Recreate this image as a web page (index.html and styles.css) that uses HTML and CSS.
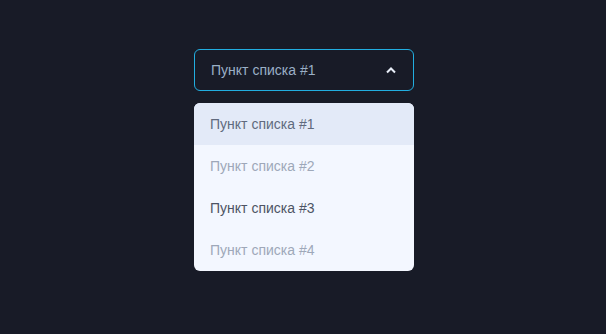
FILE: index.html
```html
<!DOCTYPE html>
<html>
  <head>
    <meta charset="utf-8">
    <title>Select</title>
    <link rel="stylesheet" href="styles.css">
  </head>
  <body>
    <section class="select">
      <div class="select-head">
        <span class="select-value">Пункт списка #1</span>
        <svg class="select-arrow" width="12" height="8" viewBox="0 0 12 8">
          <path d="M2 6.5 L6 2.5 L10 6.5" fill="none" stroke="#e8eef8" stroke-width="2"/>
        </svg>
      </div>
      <ul class="select-list">
        <li class="active">Пункт списка #1</li>
        <li class="muted">Пункт списка #2</li>
        <li>Пункт списка #3</li>
        <li class="muted">Пункт списка #4</li>
      </ul>
    </section>
  </body>
</html>
```

FILE: styles.css
```css
html {
  background: #181b27;
}
body {
  margin: 0;
  font-family: "Liberation Sans", Arial, sans-serif;
  font-size: 14px;
}
.select {
  width: 220px;
  margin: 49px auto 0;
  position: relative;
  left: 1px;
}
.select-head {
  height: 40px;
  display: flex;
  align-items: center;
  justify-content: space-between;
  padding: 0 16px 0 16px;
  border: 1px solid #22aee0;
  border-radius: 6px;
}
.select-value {
  color: #9aafc6;
}
.select-arrow {
  display: block;
  margin-right: 0;
}
.select-list {
  list-style: none;
  margin: 12px 0 0;
  padding: 0;
  background: #f3f7ff;
  border-radius: 6px;
  overflow: hidden;
}
.select-list li {
  height: 42px;
  line-height: 42px;
  padding: 0 16px;
  color: #4d5464;
}
.select-list li.active {
  background: #e3eaf8;
  color: #606a7e;
}
.select-list li.muted {
  color: #9ea8b9;
}
```
